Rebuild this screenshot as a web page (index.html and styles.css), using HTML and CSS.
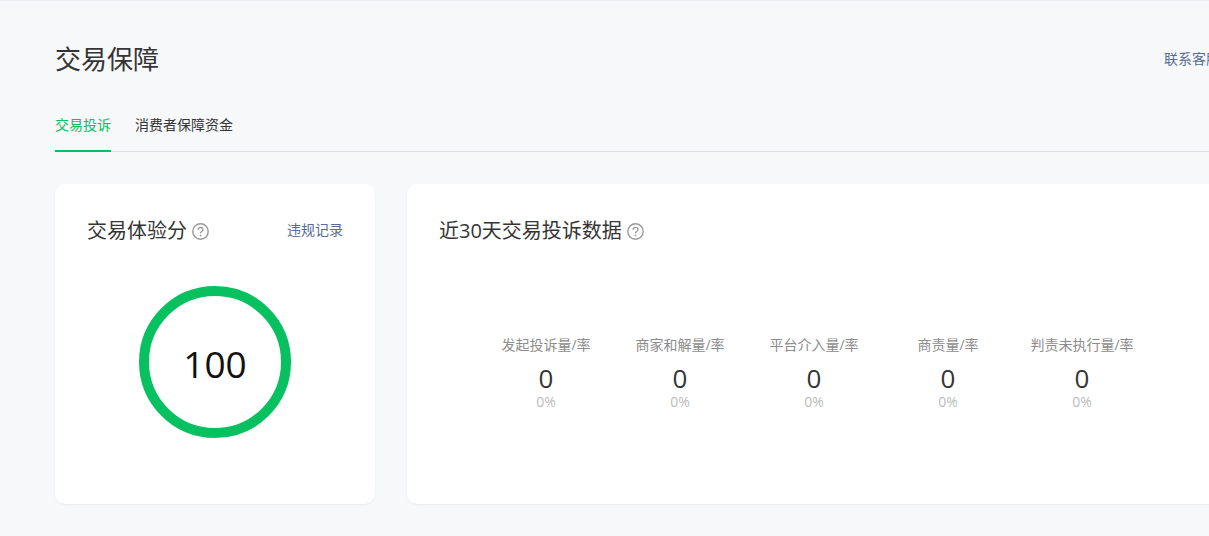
FILE: index.html
```html
<!DOCTYPE html>
<html lang="zh-CN">
<head>
<meta charset="utf-8">
<title>交易保障</title>
<link rel="stylesheet" href="styles.css">
</head>
<body>
<main class="page">
  <header class="page-head">
    <h1 class="page-title">交易保障</h1>
    <a class="link head-link">联系客服</a>
  </header>
  <nav class="tabs">
    <a class="tab tab-active">交易投诉</a>
    <a class="tab">消费者保障资金</a>
  </nav>
  <section class="cards">
    <article class="card score-card">
      <div class="card-head">
        <h2 class="card-title">交易体验分
          <svg class="help" viewBox="0 0 17 17" width="17" height="17"><circle cx="8.5" cy="8.5" r="7.7" fill="none" stroke="#999" stroke-width="1.4"/><path d="M6 6.8c0-1.5 1.1-2.4 2.5-2.4s2.5.9 2.5 2.1c0 2-2.5 1.9-2.5 3.7" fill="none" stroke="#999" stroke-width="1.3"/><circle cx="8.5" cy="12.4" r=".9" fill="#999"/></svg>
        </h2>
        <a class="link card-link">违规记录</a>
      </div>
      <div class="ring"><span class="ring-value">100</span></div>
    </article>
    <article class="card data-card">
      <div class="card-head">
        <h2 class="card-title">近30天交易投诉数据
          <svg class="help" viewBox="0 0 17 17" width="17" height="17"><circle cx="8.5" cy="8.5" r="7.7" fill="none" stroke="#999" stroke-width="1.4"/><path d="M6 6.8c0-1.5 1.1-2.4 2.5-2.4s2.5.9 2.5 2.1c0 2-2.5 1.9-2.5 3.7" fill="none" stroke="#999" stroke-width="1.3"/><circle cx="8.5" cy="12.4" r=".9" fill="#999"/></svg>
        </h2>
      </div>
      <div class="stats">
        <div class="stat"><div class="stat-label">发起投诉量/率</div><div class="stat-num">0</div><div class="stat-rate">0%</div></div>
        <div class="stat"><div class="stat-label">商家和解量/率</div><div class="stat-num">0</div><div class="stat-rate">0%</div></div>
        <div class="stat"><div class="stat-label">平台介入量/率</div><div class="stat-num">0</div><div class="stat-rate">0%</div></div>
        <div class="stat"><div class="stat-label">商责量/率</div><div class="stat-num">0</div><div class="stat-rate">0%</div></div>
        <div class="stat"><div class="stat-label">判责未执行量/率</div><div class="stat-num">0</div><div class="stat-rate">0%</div></div>
      </div>
    </article>
  </section>
</main>
</body>
</html>
```
FILE: styles.css
```css
* { box-sizing: border-box; }
html, body { margin: 0; height: 100%; overflow: hidden; }
body {
  background: #f7f8fa;
  border-top: 1px solid #ecedf0;
  font-family: "Open Sans", "Noto Sans CJK SC", sans-serif;
  color: #353535;
}
.page { width: 1195px; margin-left: 55px; }
.page-head {
  display: flex;
  justify-content: space-between;
  align-items: center;
  height: 46px;
  margin-top: 35px;
}
.page-title { margin: 0; font-size: 26px; font-weight: 400; line-height: 46px; color: #353535; }
.link { font-size: 14px; color: #576b95; line-height: 20px; }
.head-link { margin-right: 30px; white-space: nowrap; }
.tabs {
  display: flex;
  gap: 24px;
  height: 70px;
  padding-top: 33px;
  border-bottom: 1px solid #dfe0e3;
}
.tab { height: 37px; font-size: 14px; line-height: 20px; color: #353535; }
.tab-active { color: #07c160; border-bottom: 2px solid #07c160; }
.cards { display: flex; gap: 32px; margin-top: 32px; }
.card {
  height: 320px;
  background: #fff;
  border-radius: 10px;
  box-shadow: 0 1px 2px rgba(0, 0, 0, .06);
  padding: 33px 32px 32px;
}
.score-card { width: 320px; flex: none; }
.data-card { flex: 1; }
.card-head { display: flex; justify-content: space-between; align-items: center; height: 28px; }
.card-title {
  margin: 0;
  display: flex;
  align-items: center;
  gap: 5px;
  font-size: 20px;
  font-weight: 400;
  line-height: 28px;
  color: #353535;
}
.card-link { margin-bottom: 2px; }
.help { flex: none; }
.ring {
  width: 152px;
  height: 152px;
  margin: 41px auto 0;
  border: 10px solid #07c160;
  border-radius: 50%;
  display: flex;
  align-items: center;
  justify-content: center;
}
.ring-value { font-size: 37px; color: #111; line-height: 1; padding-top: 3px; }
.stats { display: flex; margin: 90px 0 0 40px; }
.stat { width: 134px; text-align: center; }
.stat-label { font-size: 14px; line-height: 20px; color: #8c8c8c; }
.stat-num { margin-top: 9px; font-size: 26px; line-height: 28px; color: #353535; }
.stat-rate { font-size: 14px; line-height: 19px; color: #bbb; }
```
